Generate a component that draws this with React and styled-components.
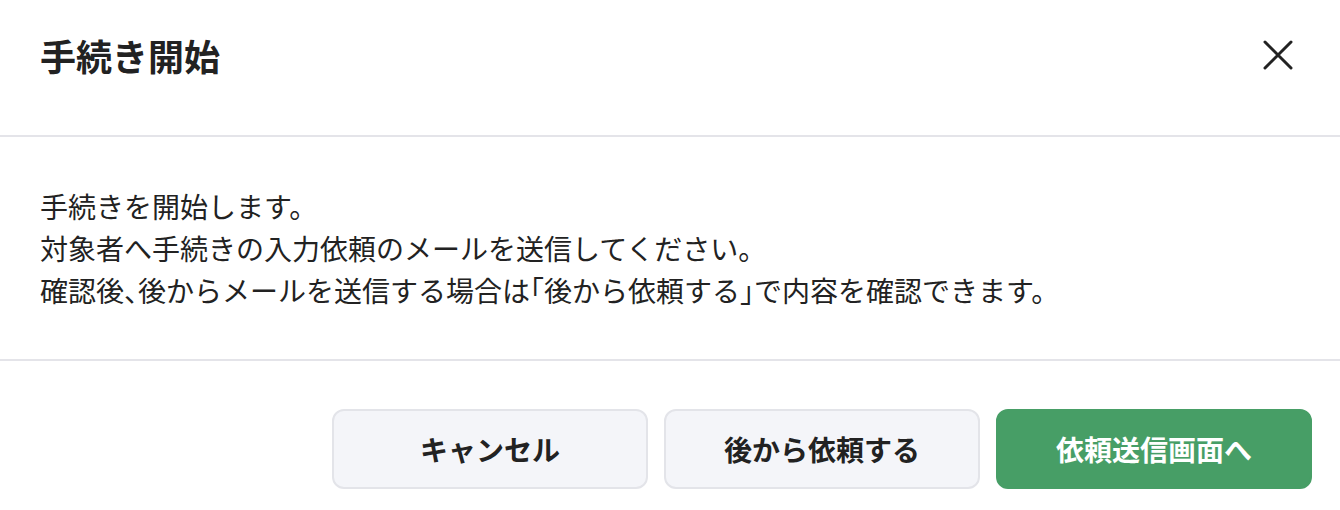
import React from "react";
import styled, { createGlobalStyle } from "styled-components";

const GlobalStyle = createGlobalStyle`
  html, body {
    margin: 0;
    padding: 0;
    background: #ffffff;
  }
  body {
    font-family: "Noto Sans CJK JP", "Noto Sans", sans-serif;
    color: #222222;
  }
`;

const Modal = styled.div`
  width: 1340px;
  background: #ffffff;
  display: flex;
  flex-direction: column;
`;

const Header = styled.header`
  height: 137px;
  box-sizing: border-box;
  padding: 31px 44px 0 40px;
  display: flex;
  align-items: flex-start;
  justify-content: space-between;
  border-bottom: 2px solid #e4e4e9;
`;

const Title = styled.h2`
  margin: 0;
  font-size: 36px;
  line-height: 48px;
  font-weight: 700;
  color: #222222;
`;

const CloseButton = styled.button`
  width: 36px;
  height: 36px;
  margin-top: 6px;
  padding: 0;
  border: none;
  background: transparent;
  display: flex;
  align-items: center;
  justify-content: center;
  color: #222222;
  cursor: pointer;
`;

const Body = styled.div`
  padding: 48px 40px;
  border-bottom: 2px solid #e4e4e9;
`;

const Paragraph = styled.p`
  margin: 0;
  font-size: 28px;
  line-height: 42px;
  font-weight: 400;
  color: #222222;
`;

const Punct = styled.span`
  font-feature-settings: "halt";
`;

const Footer = styled.footer`
  padding: 48px 28px 48px;
  display: flex;
  justify-content: flex-end;
  gap: 16px;
`;

const Button = styled.button`
  width: 316px;
  height: 80px;
  box-sizing: border-box;
  border-radius: 12px;
  font-family: "Noto Sans CJK JP", "Noto Sans", sans-serif;
  font-size: 28px;
  font-weight: 700;
  display: flex;
  align-items: center;
  justify-content: center;
  cursor: pointer;
  border: 2px solid ${(p) => (p.$primary ? "#479e66" : "#e3e4e9")};
  background: ${(p) => (p.$primary ? "#479e66" : "#f4f5f9")};
  color: ${(p) => (p.$primary ? "#ffffff" : "#222222")};
`;

export default function App() {
  return (
    <>
      <GlobalStyle />
      <Modal>
        <Header>
          <Title>手続き開始</Title>
          <CloseButton aria-label="閉じる">
            <svg width="30" height="30" viewBox="0 0 30 30" fill="none">
              <path
                d="M2 2 L28 28 M28 2 L2 28"
                stroke="#222222"
                strokeWidth="3"
                strokeLinecap="round"
              />
            </svg>
          </CloseButton>
        </Header>
        <Body>
          <Paragraph>
            手続きを開始します。
            <br />
            対象者へ手続きの入力依頼のメールを送信してください。
            <br />
            確認後<Punct>、</Punct>後からメールを送信する場合は<Punct>「</Punct>後から依頼する<Punct>」</Punct>で内容を確認できます。
          </Paragraph>
        </Body>
        <Footer>
          <Button>キャンセル</Button>
          <Button>後から依頼する</Button>
          <Button $primary>依頼送信画面へ</Button>
        </Footer>
      </Modal>
    </>
  );
}
